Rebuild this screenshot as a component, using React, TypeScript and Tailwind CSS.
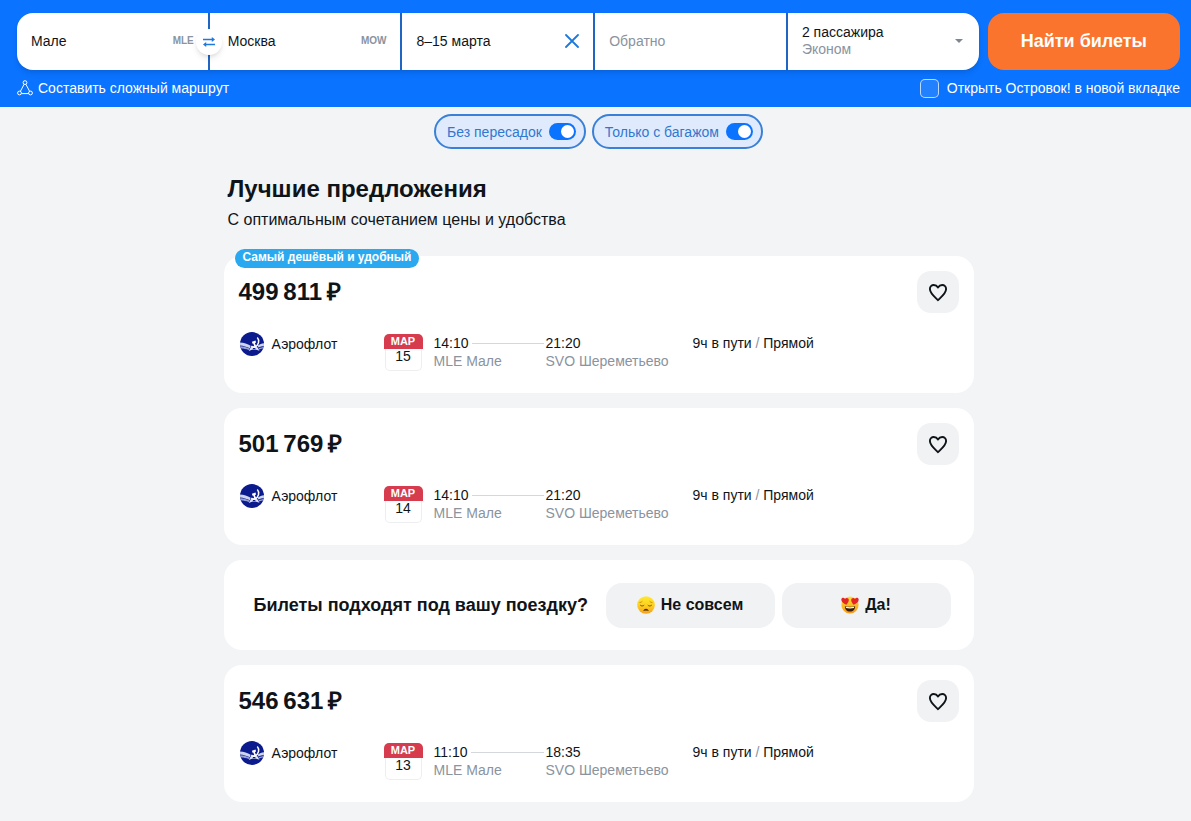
import { useState } from "react";

type Offer = {
  id: number;
  price: string;
  badge?: string;
  day: number;
  departure: string;
  arrival: string;
};

const OFFERS: Offer[] = [
  { id: 1, price: "499\u2009811\u2009₽", badge: "Самый дешёвый и удобный", day: 15, departure: "14:10", arrival: "21:20" },
  { id: 2, price: "501\u2009769\u2009₽", day: 14, departure: "14:10", arrival: "21:20" },
  { id: 3, price: "546\u2009631\u2009₽", day: 13, departure: "11:10", arrival: "18:35" },
];

function SwapIcon() {
  return (
    <svg viewBox="0 0 12 10" className="w-3 h-[10px]" fill="none" stroke="#1f78dc" strokeWidth="1.7">
      <path d="M0 2.5h10M2 7.5h10" />
      <path d="M8.8 0 12 2.5 8.8 5zM3.2 5 0 7.5 3.2 10z" fill="#1f78dc" stroke="none" />
    </svg>
  );
}

function RouteIcon() {
  return (
    <svg viewBox="0 0 16 16" className="w-4 h-4" fill="none" stroke="currentColor" strokeWidth="1">
      <circle cx="8" cy="2.6" r="1.9" />
      <circle cx="2.5" cy="13" r="1.9" />
      <circle cx="13.5" cy="13" r="1.9" />
      <path d="M7.1 4.3 3.4 11.3M8.9 4.3l3.7 7M4.4 13.6h7.2" />
    </svg>
  );
}

function HeartIcon() {
  return (
    <svg viewBox="0 0 20 20" className="w-5 h-5" fill="none" stroke="#0f1419" strokeWidth="1.9" strokeLinejoin="round">
      <path d="M10 18.2C8.2 16.2 1.9 11.6 1.9 7 1.9 4.7 3.6 3 5.8 3c1.800 0 3.300 1 4.200 2.500C10.900 4 12.400 3 14.200 3c2.200 0 3.900 1.700 3.900 4 0 4.600-6.300 9.200-8.100 11.200z" />
    </svg>
  );
}

function AeroflotLogo() {
  return (
    <svg viewBox="0 0 24 24" className="w-6 h-6 shrink-0">
      <circle cx="12" cy="12" r="12" fill="#0b1a8c" />
      {/* wings */}
      <path d="M0 10.4c4 .2 7.600 1.200 10.600 3.400l-.6 2.400C6.600 14.500 3.300 13.700.1 13.400z" fill="#cdd4ee" />
      <path d="M.5 14.300c3.300.3 6.300 1 9.200 2.300l-.9 1.500c-2.600-1-5.200-1.500-7.500-1.500z" fill="#97a3d8" />
      <path d="M24 11.200c-2.300.2-4.400.9-6.200 2.300l.5 2c1.800-.9 3.700-1.300 5.600-1.400z" fill="#cdd4ee" />
      <path d="M23.700 14.900c-1.800.1-3.600.6-5.200 1.400l.7 1.200c1.300-.6 2.700-.8 4-.9z" fill="#97a3d8" />
      {/* hull under the crossed tools */}
      <path d="M11.300 14.500h5.600l2.600 4.200-3.200-1c-1.600-.4-2.800-.4-4.400.1l-3.200 1.200z" fill="#dfe4f5" />
      {/* sickle */}
      <path d="M17.300 5.600c2.500 2.900 1.600 7.600-2.400 9.300" fill="none" stroke="#fff" strokeWidth="1.5" />
      <path d="M14.900 14.900c-1.300.4-2.600 0-3.500-.9" fill="none" stroke="#fff" strokeWidth="1.4" />
      {/* hammer */}
      <path d="m11.900 9.700 3.600-1.100.6 2-1.200.4 1.500 4-1.700.6-1.400-4.100-.8.200z" fill="#fff" />
      <path d="M12.600 16h3l-.5.9h-2z" fill="#0b1a8c" />
    </svg>
  );
}

function SadFace() {
  return (
    <svg viewBox="0 0 18 18" className="w-[18px] h-[18px]" fill="none">
      <defs>
        <linearGradient id="sad" x1="0" y1="0" x2="0" y2="1">
          <stop offset="0" stopColor="#ffe92e" />
          <stop offset="0.5" stopColor="#fdd21f" />
          <stop offset="1" stopColor="#f7a01c" />
        </linearGradient>
      </defs>
      <circle cx="9" cy="9" r="8.8" fill="url(#sad)" />
      <path d="M2.5 6.6c1.2 0 2.2-.5 2.9-1.4M15.5 6.6c-1.2 0-2.2-.5-2.9-1.4" stroke="#c98a17" strokeWidth="0.9" />
      <path d="M3.2 9c.9 1.3 3 1.3 4 0M10.8 9c.9 1.3 3 1.3 4 0" stroke="#7a5214" strokeWidth="1" />
      <path d="M6.700 14.500c.8-1.700 3.800-1.700 4.600 0-1.500-.5-3.100-.5-4.600 0z" fill="#3b1d0c" stroke="#3b1d0c" strokeWidth="0.6" />
    </svg>
  );
}

function LoveFace() {
  return (
    <svg viewBox="0 0 18 18" className="w-[18px] h-[18px]">
      <defs>
        <linearGradient id="love" x1="0" y1="0" x2="0" y2="1">
          <stop offset="0" stopColor="#ffe02e" />
          <stop offset="1" stopColor="#f7981c" />
        </linearGradient>
      </defs>
      <circle cx="9" cy="9" r="8.6" fill="url(#love)" />
      <path d="M5.3 8.7C2.5 7.7.2 5.9.3 3.6.4 1.6 3 1.1 4 2.9c1.4-1.7 4-.7 3.8 1.4-.1 1.6-1.2 3.2-2.5 4.4z" fill="#e3242b" />
      <path d="M12.7 8.7c2.8-1 5.1-2.8 5-5.1-.1-2-2.7-2.5-3.7-.7-1.4-1.7-4-.7-3.8 1.4.1 1.6 1.2 3.2 2.5 4.4z" fill="#e3242b" />
      <path d="M3.9 10.2c3.3.7 6.9.7 10.2 0 .2 3-1.9 5.3-5.1 5.3s-5.3-2.3-5.1-5.3z" fill="#3b1d0c" />
      <path d="M4.7 10.7c2.8.6 5.8.6 8.6 0l-.3 1.3c-2.6.6-5.4.6-8 0z" fill="#fff" />
    </svg>
  );
}

function SearchForm() {
  const [dates, setDates] = useState("8–15 марта");
  const [from, setFrom] = useState({ city: "Мале", code: "MLE" });
  const [to, setTo] = useState({ city: "Москва", code: "MOW" });

  const swap = () => {
    setFrom(to);
    setTo(from);
  };

  return (
    <header className="bg-[#0a73ff] pl-[17px] pr-[11px] pt-[13px] pb-[9px] text-sm">
      <form className="flex gap-[9px]" onSubmit={(e) => e.preventDefault()}>
        <div className="flex-[5] min-w-0 grid grid-cols-5 gap-[2px] h-[57px] rounded-[16px] bg-[#1f66c4] overflow-hidden shadow-md">
          <div className="relative bg-white flex items-center px-[14px] pb-[2px]">
            <input
              aria-label="Откуда"
              value={from.city}
              onChange={(e) => setFrom({ ...from, city: e.target.value })}
              className="flex-1 min-w-0 bg-transparent outline-none"
            />
            <span className="pt-[2px] text-[10px] font-bold text-[#8a939e]">{from.code}</span>
            <button
              type="button"
              aria-label="Поменять местами"
              onClick={swap}
              className="absolute z-10 -right-[14px] top-1/2 -translate-y-1/2 w-[26px] h-[26px] rounded-full bg-white shadow-md flex items-center justify-center cursor-pointer"
            >
              <SwapIcon />
            </button>
          </div>
          <div className="bg-white flex items-center pl-[18px] pr-[14px] pb-[2px]">
            <input
              aria-label="Куда"
              value={to.city}
              onChange={(e) => setTo({ ...to, city: e.target.value })}
              className="flex-1 min-w-0 bg-transparent outline-none"
            />
            <span className="pt-[2px] text-[10px] font-bold text-[#8a939e]">{to.code}</span>
          </div>
          <div className="bg-white flex items-center px-[14px] pb-[2px]">
            <input
              aria-label="Туда"
              value={dates}
              onChange={(e) => setDates(e.target.value)}
              className="flex-1 min-w-0 bg-transparent outline-none"
            />
            <button type="button" aria-label="Очистить даты" onClick={() => setDates("")} className="cursor-pointer">
              <svg viewBox="0 0 14 14" className="w-[14px] h-[14px]" stroke="#1f78dc" strokeWidth="1.8" strokeLinecap="round">
                <path d="m1 1 12 12M13 1 1 13" />
              </svg>
            </button>
          </div>
          <div className="bg-white flex items-center px-[14px] pb-[2px]">
            <input
              aria-label="Обратно"
              placeholder="Обратно"
              className="w-full min-w-0 bg-transparent outline-none placeholder:text-[#8a939e]"
            />
          </div>
          <button
            type="button"
            aria-haspopup="dialog"
            className="bg-white flex items-center justify-between pl-[14px] pr-4 pb-[2px] text-left cursor-pointer"
          >
            <span className="leading-[17px]">
              <span className="block">2 пассажира</span>
              <span className="block text-[#8a939e]">Эконом</span>
            </span>
            <svg viewBox="0 0 8 4" className="w-2 h-1" fill="#7d8791">
              <path d="M0 0h8L4 4z" />
            </svg>
          </button>
        </div>
        <button
          type="submit"
          className="flex-1 h-[57px] pb-[2px] rounded-[16px] bg-[#fa742d] text-white text-lg font-bold whitespace-nowrap cursor-pointer"
        >
          Найти билеты
        </button>
      </form>

      <div className="mt-2 flex items-center justify-between text-white">
        <a href="#multi" className="flex items-center gap-[5px]">
          <RouteIcon />
          Составить сложный маршрут
        </a>
        <label className="flex items-center gap-2 cursor-pointer">
          <input
            type="checkbox"
            className="appearance-none w-[19px] h-[19px] rounded-[5px] border border-white/70 bg-white/10 checked:bg-white"
          />
          Открыть Островок! в новой вкладке
        </label>
      </div>
    </header>
  );
}

function FilterChip({ label }: { label: string }) {
  return (
    <label className="flex items-center gap-[7px] h-[35px] pl-[11px] pr-2 rounded-full border-2 border-[#3a80d8] bg-[#dfeafc] text-sm text-[#2f78d0] cursor-pointer">
      {label}
      <input
        type="checkbox"
        role="switch"
        defaultChecked
        className="appearance-none flex items-center w-[27px] h-[17px] px-[2px] rounded-full bg-gray-400 checked:bg-[#0a73ff] checked:justify-end before:content-[''] before:w-[13px] before:h-[13px] before:rounded-full before:bg-white cursor-pointer"
      />
    </label>
  );
}

function OfferCard({ offer }: { offer: Offer }) {
  return (
    <article className="relative bg-white rounded-[18px] px-[15px] pt-[15px] pb-[22px]">
      {offer.badge && (
        <span className="absolute left-[11px] -top-[7px] h-[19px] px-2 rounded-full bg-[#2aa9f0] text-white text-xs leading-[17px] font-bold">
          {offer.badge}
        </span>
      )}
      <div className="flex items-center justify-between">
        <h3 className="text-2xl leading-[42px] font-bold">{offer.price}</h3>
        <button
          type="button"
          aria-label="В избранное"
          className="w-[42px] h-[42px] rounded-[14px] bg-[#f1f2f4] flex items-center justify-center cursor-pointer"
        >
          <HeartIcon />
        </button>
      </div>

      <div className="mt-[21px] flex items-start text-sm leading-[18px]">
        <div className="w-[145px] h-5 flex items-center gap-2 pl-px">
          <AeroflotLogo />
          <span>Аэрофлот</span>
        </div>
        <div className="w-[39px] text-center">
          <div className="h-[15px] rounded-t-[5px] bg-[#d63c4e] text-white text-[11px] leading-[15px] font-bold">МАР</div>
          <div className="h-[22px] mx-px rounded-b-[5px] border border-t-0 border-[#eceef0] leading-[15px]">{offer.day}</div>
        </div>
        <div className="w-[112px] ml-[11px]">
          <div className="flex items-center gap-[3px] pr-[2px]">
            {offer.departure}
            <span className="flex-1 h-px bg-[#d5d8db]" />
          </div>
          <div className="text-[#8a939e]">MLE Мале</div>
        </div>
        <div className="w-[147px]">
          <div>{offer.arrival}</div>
          <div className="text-[#8a939e]">SVO Шереметьево</div>
        </div>
        <div>
          9ч в пути <span className="text-[#8a939e]">/</span> Прямой
        </div>
      </div>
    </article>
  );
}

function Feedback() {
  return (
    <section className="bg-white rounded-[18px] h-[90px] pl-[30px] pr-[23px] flex items-center justify-between">
      <h3 className="text-lg font-bold">Билеты подходят под вашу поездку?</h3>
      <div className="flex gap-[7px]">
        <button
          type="button"
          className="w-[169px] h-[45px] rounded-[16px] bg-[#f1f2f4] flex items-center justify-center gap-[6px] font-bold cursor-pointer"
        >
          <SadFace />
          Не совсем
        </button>
        <button
          type="button"
          className="w-[169px] h-[45px] rounded-[16px] bg-[#f1f2f4] flex items-center justify-center gap-[6px] font-bold cursor-pointer"
        >
          <LoveFace />
          Да!
        </button>
      </div>
    </section>
  );
}

export default function App() {
  return (
    <div className="min-h-screen bg-[#f2f4f6] text-[#0f1419] font-['Liberation_Sans',Arial,sans-serif]">
      <SearchForm />

      <main className="pl-[17px] pr-[11px] pb-[19px]">
        {/* Filters */}
        <div className="flex justify-center gap-[6px] pt-[7px]">
          <FilterChip label="Без пересадок" />
          <FilterChip label="Только с багажом" />
        </div>

        <div className="max-w-[750px] mx-auto">
          <div className="px-1 pt-6 pb-6">
            <h2 className="text-2xl font-bold">Лучшие предложения</h2>
            <p className="mt-[2px] text-base leading-[25px]">С оптимальным сочетанием цены и удобства</p>
          </div>

          <div className="flex flex-col gap-[15px]">
            {OFFERS.slice(0, 2).map((offer) => (
              <OfferCard key={offer.id} offer={offer} />
            ))}
            <Feedback />
            {OFFERS.slice(2).map((offer) => (
              <OfferCard key={offer.id} offer={offer} />
            ))}
          </div>
        </div>
      </main>
    </div>
  );
}
